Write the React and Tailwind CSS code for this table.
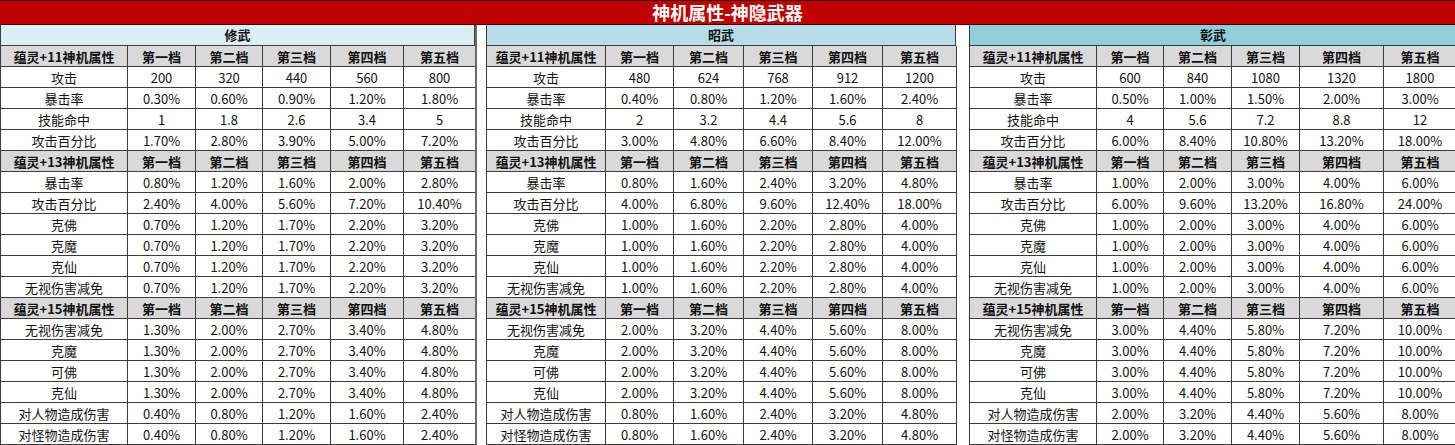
const font = { fontFamily: '"Noto Sans CJK SC", "Liberation Sans", sans-serif' };

const tiers = ["第一档", "第二档", "第三档", "第四档", "第五档"];

const panels = [
  {
    name: "修武",
    titleBg: "bg-[#daeef3]",
    width: "w-[475px]",
    cols: ["w-[127px]", "w-[68px]", "w-[67px]", "w-[68px]", "w-[73px]", "w-[72px]"],
    groups: [
      {
        level: 11,
        rows: [
          ["攻击", "200", "320", "440", "560", "800"],
          ["暴击率", "0.30%", "0.60%", "0.90%", "1.20%", "1.80%"],
          ["技能命中", "1", "1.8", "2.6", "3.4", "5"],
          ["攻击百分比", "1.70%", "2.80%", "3.90%", "5.00%", "7.20%"],
        ],
      },
      {
        level: 13,
        rows: [
          ["暴击率", "0.80%", "1.20%", "1.60%", "2.00%", "2.80%"],
          ["攻击百分比", "2.40%", "4.00%", "5.60%", "7.20%", "10.40%"],
          ["克佛", "0.70%", "1.20%", "1.70%", "2.20%", "3.20%"],
          ["克魔", "0.70%", "1.20%", "1.70%", "2.20%", "3.20%"],
          ["克仙", "0.70%", "1.20%", "1.70%", "2.20%", "3.20%"],
          ["无视伤害减免", "0.70%", "1.20%", "1.70%", "2.20%", "3.20%"],
        ],
      },
      {
        level: 15,
        rows: [
          ["无视伤害减免", "1.30%", "2.00%", "2.70%", "3.40%", "4.80%"],
          ["克魔", "1.30%", "2.00%", "2.70%", "3.40%", "4.80%"],
          ["可佛", "1.30%", "2.00%", "2.70%", "3.40%", "4.80%"],
          ["克仙", "1.30%", "2.00%", "2.70%", "3.40%", "4.80%"],
          ["对人物造成伤害", "0.40%", "0.80%", "1.20%", "1.60%", "2.40%"],
          ["对怪物造成伤害", "0.40%", "0.80%", "1.20%", "1.60%", "2.40%"],
        ],
      },
    ],
  },
  {
    name: "昭武",
    titleBg: "bg-[#b7dee8]",
    width: "w-[470px]",
    cols: ["w-[119px]", "w-[68px]", "w-[70px]", "w-[69px]", "w-[70px]", "w-[74px]"],
    groups: [
      {
        level: 11,
        rows: [
          ["攻击", "480", "624", "768", "912", "1200"],
          ["暴击率", "0.40%", "0.80%", "1.20%", "1.60%", "2.40%"],
          ["技能命中", "2", "3.2", "4.4", "5.6", "8"],
          ["攻击百分比", "3.00%", "4.80%", "6.60%", "8.40%", "12.00%"],
        ],
      },
      {
        level: 13,
        rows: [
          ["暴击率", "0.80%", "1.60%", "2.40%", "3.20%", "4.80%"],
          ["攻击百分比", "4.00%", "6.80%", "9.60%", "12.40%", "18.00%"],
          ["克佛", "1.00%", "1.60%", "2.20%", "2.80%", "4.00%"],
          ["克魔", "1.00%", "1.60%", "2.20%", "2.80%", "4.00%"],
          ["克仙", "1.00%", "1.60%", "2.20%", "2.80%", "4.00%"],
          ["无视伤害减免", "1.00%", "1.60%", "2.20%", "2.80%", "4.00%"],
        ],
      },
      {
        level: 15,
        rows: [
          ["无视伤害减免", "2.00%", "3.20%", "4.40%", "5.60%", "8.00%"],
          ["克魔", "2.00%", "3.20%", "4.40%", "5.60%", "8.00%"],
          ["可佛", "2.00%", "3.20%", "4.40%", "5.60%", "8.00%"],
          ["克仙", "2.00%", "3.20%", "4.40%", "5.60%", "8.00%"],
          ["对人物造成伤害", "0.80%", "1.60%", "2.40%", "3.20%", "4.80%"],
          ["对怪物造成伤害", "0.80%", "1.60%", "2.40%", "3.20%", "4.80%"],
        ],
      },
    ],
  },
  {
    name: "彰武",
    titleBg: "bg-[#92cddc]",
    width: "w-[488px]",
    cols: ["w-[127px]", "w-[67px]", "w-[68px]", "w-[68px]", "w-[84px]", "w-[73px]"],
    groups: [
      {
        level: 11,
        rows: [
          ["攻击", "600", "840", "1080", "1320", "1800"],
          ["暴击率", "0.50%", "1.00%", "1.50%", "2.00%", "3.00%"],
          ["技能命中", "4", "5.6", "7.2", "8.8", "12"],
          ["攻击百分比", "6.00%", "8.40%", "10.80%", "13.20%", "18.00%"],
        ],
      },
      {
        level: 13,
        rows: [
          ["暴击率", "1.00%", "2.00%", "3.00%", "4.00%", "6.00%"],
          ["攻击百分比", "6.00%", "9.60%", "13.20%", "16.80%", "24.00%"],
          ["克佛", "1.00%", "2.00%", "3.00%", "4.00%", "6.00%"],
          ["克魔", "1.00%", "2.00%", "3.00%", "4.00%", "6.00%"],
          ["克仙", "1.00%", "2.00%", "3.00%", "4.00%", "6.00%"],
          ["无视伤害减免", "1.00%", "2.00%", "3.00%", "4.00%", "6.00%"],
        ],
      },
      {
        level: 15,
        rows: [
          ["无视伤害减免", "3.00%", "4.40%", "5.80%", "7.20%", "10.00%"],
          ["克魔", "3.00%", "4.40%", "5.80%", "7.20%", "10.00%"],
          ["可佛", "3.00%", "4.40%", "5.80%", "7.20%", "10.00%"],
          ["克仙", "3.00%", "4.40%", "5.80%", "7.20%", "10.00%"],
          ["对人物造成伤害", "2.00%", "3.20%", "4.40%", "5.60%", "8.00%"],
          ["对怪物造成伤害", "2.00%", "3.20%", "4.40%", "5.60%", "8.00%"],
        ],
      },
    ],
  },
];

function Row({ cells, cols, header }) {
  return (
    <div className={`flex h-[21px] ${header ? "bg-[#d9d9d9] font-bold" : "bg-white"}`}>
      {cells.map((c, i) => (
        <div
          key={i}
          className={`${cols[i]} shrink-0 flex items-center justify-center border-r border-b border-[#3c3c3c] leading-none whitespace-nowrap`}
        >
          {c}
        </div>
      ))}
    </div>
  );
}

function Panel({ panel }) {
  return (
    <div className={`${panel.width} shrink-0 border-l border-[#3c3c3c]`}>
      {/* Section title */}
      <div
        className={`h-[21px] ${panel.titleBg} flex items-center justify-center font-bold border-r border-b border-[#3c3c3c]`}
      >
        {panel.name}
      </div>
      {panel.groups.map((g) => (
        <div key={g.level}>
          <Row header cells={[`蕴灵+${g.level}神机属性`, ...tiers]} cols={panel.cols} />
          {g.rows.map((r, i) => (
            <Row key={i} cells={r} cols={panel.cols} />
          ))}
        </div>
      ))}
    </div>
  );
}

export default function App() {
  return (
    <div className="w-[1455px] h-[445px] bg-white text-[13px] text-[#111] overflow-hidden" style={font}>
      {/* Banner */}
      <div className="h-[25px] bg-[#c00000] border-t border-b border-[#3a0000] flex items-center justify-center text-white font-bold text-[18px]">
        神机属性-神隐武器
      </div>
      <div className="flex">
        <Panel panel={panels[0]} />
        <div className="w-[11px] shrink-0 border-l-2 border-[#6b6b6b]" />
        <Panel panel={panels[1]} />
        <div className="w-[13px] shrink-0" />
        <Panel panel={panels[2]} />
      </div>
    </div>
  );
}
